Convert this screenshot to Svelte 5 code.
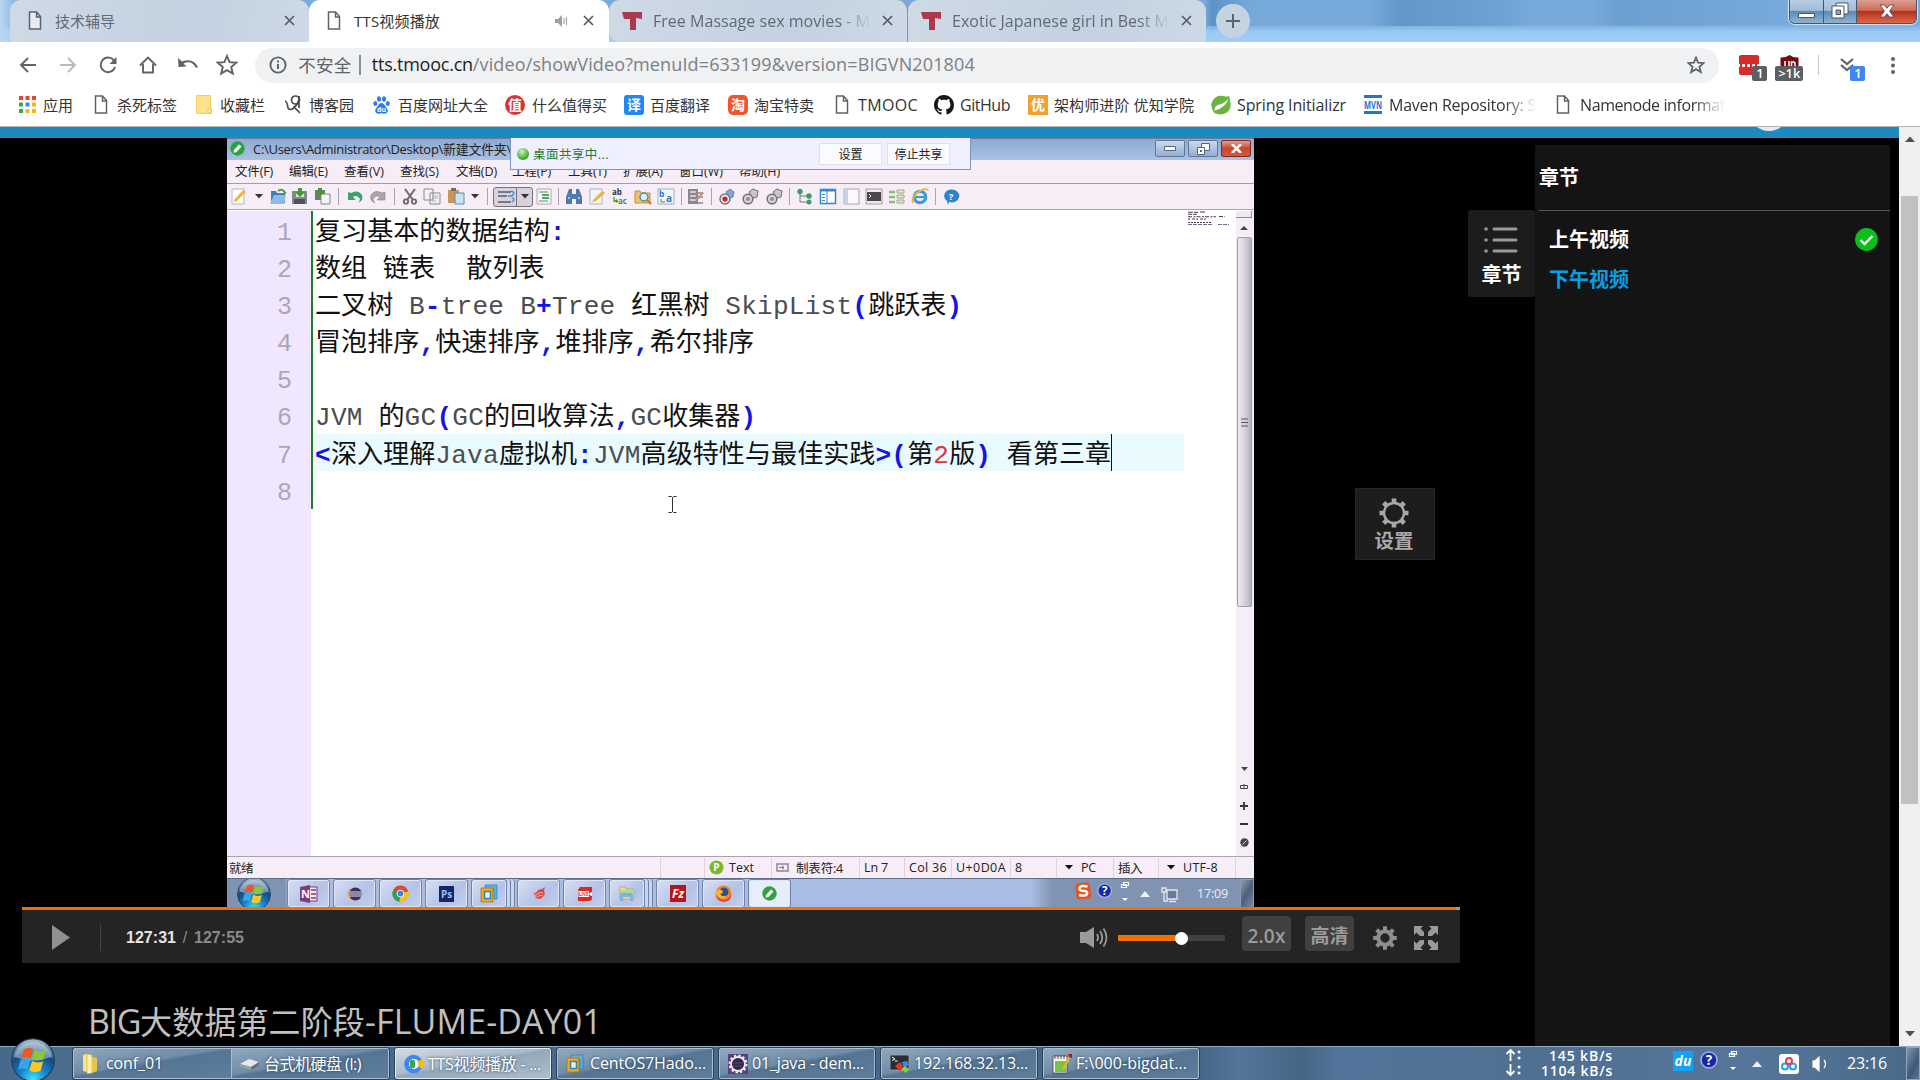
<script>
  // Spreads a label's letters so that it occupies the given width in pixels.
  function fit(node, width) {
    if (!width) return;
    const count = [...node.textContent].length;
    const natural = node.getBoundingClientRect().width;
    node.style.letterSpacing = (width - natural) / count + 'px';
  }

  const tabs = [
    { icon: 'file', label: '技术辅导', w: 60 },
    { icon: 'file', label: 'TTS视频播放', w: 86, active: true, sound: true },
    { icon: 'tee', label: 'Free Massage sex movies - M', w: 217, fade: true },
    { icon: 'tee', label: 'Exotic Japanese girl in Best M', w: 217, fade: true }
  ];

  // slot: full width of the bookmark, gap: icon column width, w: label width
  const bookmarks = [
    { icon: 'apps', label: '应用', slot: 75, gap: 24, w: 30 },
    { icon: 'file', label: '杀死标签', slot: 102, gap: 23, w: 60 },
    { icon: 'folder', label: '收藏栏', slot: 88, gap: 24, w: 45 },
    { icon: 'blog', label: '博客园', slot: 89, gap: 25, w: 45 },
    { icon: 'paw', label: '百度网址大全', slot: 132, gap: 25, w: 90 },
    { icon: 'zhi', label: '什么值得买', slot: 119, gap: 27, w: 75 },
    { icon: 'yi', label: '百度翻译', slot: 104, gap: 26, w: 60 },
    { icon: 'tao', label: '淘宝特卖', slot: 107, gap: 26, w: 60 },
    { icon: 'file', label: 'TMOOC', slot: 99, gap: 23, w: 60, latin: true },
    { icon: 'github', label: 'GitHub', slot: 94, gap: 26, w: 50, latin: true },
    { icon: 'you', label: '架构师进阶 优知学院', slot: 183, gap: 26, w: 140 },
    { icon: 'spring', label: 'Spring Initializr', slot: 153, gap: 26, w: 109, latin: true },
    { icon: 'mvn', label: 'Maven Repository: S', slot: 192, gap: 25, w: 147, latin: true, fade: true },
    { icon: 'file', label: 'Namenode informat', slot: 169, gap: 24, w: 145, latin: true, fade: true }
  ];

  const menus = [
    ['文件(F)', 54, 38], ['编辑(E)', 55, 39], ['查看(V)', 56, 40], ['查找(S)', 56, 39], ['文档(D)', 56, 41],
    ['工程(P)', 56, 39], ['工具(T)', 55, 39], ['扩展(A)', 56, 40], ['窗口(W)', 60, 44], ['帮助(H)', 60, 41]
  ];

  const tools = [
    ['new', 24], ['caret', 16], ['open', 21], ['save', 24], ['saveall', 22], ['sep', 9], ['undo', 23], ['redo', 24], ['sep', 8],
    ['cut', 23], ['copy', 22], ['paste', 25], ['caret', 14], ['sep', 10], ['toggle', 42], ['page', 20], ['sep', 8],
    ['find', 23], ['edit', 23], ['replace', 23], ['findfolder', 23], ['ba', 23], ['sep', 8], ['grid', 22], ['sep', 8],
    ['record', 23], ['cam', 24], ['cam', 23], ['sep', 8], ['tree', 23], ['panel', 23], ['panel2', 23], ['console', 23],
    ['list', 23], ['ie', 23], ['sep', 8], ['help', 23]
  ];

  // Token kinds: t = text, o = operator, n = number, l = latin word
  const code = [
    [['t', '复习基本的数据结构'], ['o', ':']],
    [['t', '数组 链表  散列表']],
    [['t', '二叉树 '], ['l', 'B'], ['o', '-'], ['l', 'tree B'], ['o', '+'], ['l', 'Tree '], ['t', '红黑树 '], ['l', 'SkipList'], ['o', '('], ['t', '跳跃表'], ['o', ')']],
    [['t', '冒泡排序'], ['o', ','], ['t', '快速排序'], ['o', ','], ['t', '堆排序'], ['o', ','], ['t', '希尔排序']],
    [],
    [['l', 'JVM '], ['t', '的'], ['l', 'GC'], ['o', '('], ['l', 'GC'], ['t', '的回收算法'], ['o', ','], ['l', 'GC'], ['t', '收集器'], ['o', ')']],
    [['o', '<'], ['t', '深入理解'], ['l', 'Java'], ['t', '虚拟机'], ['o', ':'], ['l', 'JVM'], ['t', '高级特性与最佳实践'], ['o', '>('], ['t', '第'], ['n', '2'], ['t', '版'], ['o', ')'], ['t', ' 看第三章']],
    []
  ];

  const status = [
    ['', 44, ''], ['p', 67, 'Text', 25], ['tab', 88, '制表符:4', 47], ['', 45, 'Ln 7', 24], ['', 47, 'Col 36', 38],
    ['', 59, 'U+0D0A', 50], ['', 46, '8', 7], ['caret', 57, 'PC', 15], ['', 45, '插入', 24], ['caret', 77, 'UTF-8', 35]
  ];

  const innerTasks = [
    ['onenote', 43, 3], ['eclipse', 43, 3], ['chrome', 43, 3], ['ps', 43, 3], ['vm', 36, 10, true], ['bird', 43, 3], ['live', 43, 3],
    ['explorer', 36, 11, true], ['fz', 43, 3], ['firefox', 43, 3], ['green', 43, 0]
  ];

  const tasks = [
    { icon: 'folders', label: 'conf_01', w: 57, kind: 'first' },
    { icon: 'disk', label: '台式机硬盘 (I:)', w: 97, kind: 'joined' },
    { icon: 'tschrome', label: 'TTS视频播放 - ...', w: 113, kind: 'lit' },
    { icon: 'vm', label: 'CentOS7Hado...', w: 116 },
    { icon: 'gearbox', label: '01_java - dem...', w: 112 },
    { icon: 'term', label: '192.168.32.13...', w: 114 },
    { icon: 'note', label: 'F:\\000-bigdat...', w: 111 }
  ];
</script>

{#snippet winlogo()}
  <svg viewBox="0 0 42 42" class="orb" aria-hidden="true">
    <defs>
      <radialGradient id="orbfill" cx="50%" cy="95%" r="90%">
        <stop offset="0" stop-color="#3be4ff" />
        <stop offset=".35" stop-color="#1687cc" />
        <stop offset=".7" stop-color="#17497e" />
        <stop offset="1" stop-color="#9ab4cc" />
      </radialGradient>
    </defs>
    <circle cx="21" cy="21" r="20.3" fill="url(#orbfill)" stroke="#173a5c" stroke-width="1" />
    <path d="M3 18a18.500 18.500 0 0 1 36 0q-18 7-36 0z" fill="#fff" opacity=".38" />
    <path d="M12 11q5-3 9-.5l-2.300 9q-4-2.500-9-.3z" fill="#ec5a24" />
    <path d="M22.500 11.300q5 2.700 11-.3l-2.500 9.200q-5.500 2.300-10.800-.4z" fill="#8cc63a" />
    <path d="M9.200 21q5-2.500 9.200.3l-2.400 9q-4.500-2.300-9.200 0z" fill="#37a6ea" />
    <path d="M20 22q5.300 2.600 10.700.2l-2.400 9q-5.400 2.600-10.700-.2z" fill="#fdc528" />
  </svg>
{/snippet}

{#snippet icon(name)}
  {#if name === 'file'}
    <svg width="14" height="19" viewBox="0 0 14 19"><path d="M1.500 1h7l4 4.500V18h-11zM8.500 1v5h4" fill="#fff" fill-opacity=".5" stroke="#5f6368" stroke-width="1.500" /></svg>
  {:else if name === 'tee'}
    <svg width="21" height="20" viewBox="0 0 21 20"><path d="M0 1h20v7l-6-1v12H8V8H2z" fill="#ad3a4c" /></svg>
  {:else if name === 'apps'}
    <svg width="17" height="17" viewBox="0 0 17 17">
      <path d="M0 0h4v4H0zM6.500 0h4v4h-4zM13 0h4v4h-4z" fill="#ea4335" /><path d="M0 6.500h4v4H0z" fill="#34a853" /><path d="M6.500 6.500h4v4h-4z" fill="#4285f4" />
      <path d="M13 6.500h4v4h-4zM6.500 13h4v4h-4zM13 13h4v4h-4z" fill="#fbb30a" /><path d="M0 13h4v4H0z" fill="#34a853" />
    </svg>
  {:else if name === 'folder'}
    <svg width="16" height="19" viewBox="0 0 16 19"><path d="M.5.500h14v12l1 2v4H.5z" fill="#fee18a" stroke="#f2cf60" /><path d="M12 14l3-1v5h-3z" fill="#fff0b8" stroke="#e3bb47" stroke-width=".7" /></svg>
  {:else if name === 'blog'}
    <svg width="18" height="19" viewBox="0 0 18 19" fill="none" stroke="#4a4a4a" stroke-width="1.700"><path d="M1 6q2 0 3 7 2 3 6 0" /><circle cx="11.500" cy="5" r="4" /><path d="M15 4q-1 6-5 8l6 6M15 1v12" /></svg>
  {:else if name === 'paw'}
    <svg width="17" height="18" viewBox="0 0 17 18" fill="#2b7cee"><ellipse cx="2.300" cy="7.500" rx="2" ry="2.600" /><ellipse cx="6" cy="3" rx="2" ry="2.800" /><ellipse cx="11" cy="3" rx="2" ry="2.800" /><ellipse cx="14.800" cy="7.500" rx="2" ry="2.600" /><path d="M8.500 7q2.500 0 4 3.500 3.500 3 1.700 6-1.700 2-5.700.8-4 1.200-5.700-.8-1.800-3 1.700-6Q6 7 8.500 7z" /><text x="8.500" y="16" font-size="7" font-weight="bold" fill="#fff" text-anchor="middle">du</text></svg>
  {:else if name === 'zhi' || name === 'yi' || name === 'tao' || name === 'you'}
    <span class="glyph {name}">{{ zhi: '值', yi: '译', tao: '淘', you: '优' }[name]}</span>
  {:else if name === 'github'}
    <svg width="20" height="20" viewBox="0 0 16 16"><path fill="#15171a" d="M8 0C3.580 0 0 3.580 0 8c0 3.540 2.290 6.530 5.470 7.590.4.070.55-.17.55-.38 0-.19-.01-.82-.01-1.490-2.010.37-2.530-.49-2.690-.94-.09-.23-.48-.94-.82-1.130-.28-.15-.68-.52-.01-.53.63-.01 1.080.58 1.230.82.72 1.210 1.870.87 2.330.66.070-.52.280-.87.510-1.070-1.780-.2-3.640-.89-3.640-3.950 0-.87.310-1.590.82-2.150-.08-.2-.36-1.020.080-2.120 0 0 .67-.21 2.200.82.640-.18 1.320-.27 2-.27s1.360.090 2 .27c1.530-1.040 2.200-.82 2.200-.82.440 1.100.160 1.920.080 2.120.51.560.82 1.270.82 2.150 0 3.070-1.870 3.750-3.650 3.950.290.25.540.73.540 1.480 0 1.070-.01 1.930-.01 2.200 0 .21.150.46.550.38A8.010 8.010 0 0 0 16 8c0-4.420-3.580-8-8-8z" /></svg>
  {:else if name === 'spring'}
    <svg width="20" height="20" viewBox="0 0 20 20"><path d="M18 1q4 12-2 16.500-7 4-13 0Q-1.500 11 1.500 6 5 0 11 .8q4 1.500 7 .2z" fill="#6db33f" /><path d="M17.500 3.500Q13 9 8 9.500q-5 1.500-4.500 6 4-.3 8-3.500 4.500-3.500 6-8.500z" fill="#fff" /><path d="M3 17.500q8 1 14-8" fill="none" stroke="#6db33f" stroke-width="1.500" /></svg>
  {:else if name === 'mvn'}
    <svg width="18" height="19" viewBox="0 0 18 19"><path d="M0 0h18v3H0zM0 16h18v3H0z" fill="#2574c9" /><text x="9" y="13.700" text-anchor="middle" font-size="10.500" font-weight="bold" fill="#2574c9" textLength="18" lengthAdjust="spacingAndGlyphs">MVN</text></svg>
  {:else if name === 'onenote'}
    <svg width="18" height="18" viewBox="0 0 18 18"><path d="M9 2h8v14H9z" fill="#f3e8f5" stroke="#80397b" /><path d="M11 5h3M11 9h3M11 13h3" stroke="#80397b" stroke-width="1.300" /><path d="M15 4v2M15 8v2M15 12v2" stroke="#80397b" stroke-width="1.500" /><path d="M0 2l10-2v18L0 16z" fill="#80397b" /><text x="1" y="13" font-size="11" font-weight="bold" fill="#fff">N</text></svg>
  {:else if name === 'eclipse'}
    <svg width="16" height="16" viewBox="0 0 16 16"><circle cx="7" cy="8" r="6.500" fill="#e8a45a" /><circle cx="8.500" cy="8" r="6.500" fill="#3b3158" /><path d="M2 6h13M2 8h13M2 10h13" stroke="#e4e0f0" stroke-width="1.100" /></svg>
  {:else if name === 'chrome'}
    <svg width="17" height="17" viewBox="0 0 18 18"><circle cx="9" cy="9" r="8.500" fill="#e24436" /><path d="M9 9L1.600 4.700A8.500 8.500 0 0 0 8 17.500z" fill="#2fa24d" /><path d="M9 9l8.400-2.500A8.500 8.500 0 0 1 8 17.500z" fill="#fbc116" /><circle cx="9" cy="9" r="4" fill="#fff" /><circle cx="9" cy="9" r="3.100" fill="#3f83ea" /></svg>
  {:else if name === 'tschrome'}
    <svg width="19" height="20" viewBox="0 0 19 20"><circle cx="9.500" cy="10" r="9.300" fill="#4285f4" /><circle cx="10" cy="10" r="5" fill="#fff" /><path d="M14 8l2-2h3v8h-3l-2-2z" fill="#fbbc05" /><path d="M6 7l1-1h3l1 1v6l-1 1H7l-1-1z" fill="#34a853" /></svg>
  {:else if name === 'ps'}
    <svg width="15" height="16" viewBox="0 0 15 16"><path d="M0 0h15v16H0z" fill="#1b2367" /><text x="2" y="11.500" font-size="10" font-weight="bold" fill="#8fc3f5">Ps</text></svg>
  {:else if name === 'vm'}
    <svg width="18" height="20" viewBox="0 0 18 20"><path d="M5 1h12v14h-3V5H5z" fill="#5ab6dd" stroke="#2c7ba3" stroke-width=".7" /><path d="M1 4h12v14H1z" fill="#f5a623" stroke="#a8690f" stroke-width=".7" /><path d="M4.500 7.500h6v7h-6z" fill="#dff0fa" stroke="#3086b0" stroke-width="1.500" /></svg>
  {:else if name === 'bird'}
    <svg width="16" height="15" viewBox="0 0 16 15"><path d="M1 6l4 1q2-4 6-4l3-2-1 4q2 3-1 6-4 4-8 0l2-1-4-2h3z" fill="#dc4a45" /><path d="M5 9q4-4 7-2M6 11q3-3 6-1" stroke="#f7b5ae" fill="none" /></svg>
  {:else if name === 'live'}
    <svg width="16" height="16" viewBox="0 0 16 16"><path d="M3 1h12v11q0 3-3 3H1V4z" fill="#d92a24" /><path d="M1.500 5h10.500v6H1.500zM12.500 7l2.500-1v4l-2.500-1z" fill="#fff" /><text x="6.800" y="9.800" text-anchor="middle" font-size="4.500" font-weight="bold" fill="#d92a24">LIVE</text></svg>
  {:else if name === 'explorer'}
    <svg width="18" height="17" viewBox="0 0 18 17"><path d="M2 2h5l1 2h8v10H2z" fill="#f2da86" stroke="#c5a548" stroke-width=".8" /><path d="M3 5h12v3H3z" fill="#a7d8a0" /><path d="M2 16v-6q0-2 2-2h9q2 0 2 2v6h-3v-4H5v4z" fill="#7bb3dd" /></svg>
  {:else if name === 'fz'}
    <svg width="16" height="17" viewBox="0 0 16 17"><path d="M0 0h16v17H0z" fill="#b3161b" /><text x="8" y="13" text-anchor="middle" font-size="12" font-weight="bold" font-style="italic" fill="#fff">Fz</text></svg>
  {:else if name === 'firefox'}
    <svg width="17" height="17" viewBox="0 0 17 17"><circle cx="8.500" cy="8.500" r="8" fill="#f08a1e" /><path d="M1 5q0 9 8 10 6-1 7-7 1 7-5 8.500-8 1-10-5.500z" fill="#e2402c" /><circle cx="9" cy="7" r="4.500" fill="#264f9c" /><path d="M1 6q4-3 7 0 0 3-3 3 3 4 7 1-2 5-7 3-5-2-4-7z" fill="#fbb42c" /></svg>
  {:else if name === 'green'}
    <svg width="15" height="15" viewBox="0 0 15 15"><circle cx="7.500" cy="7.500" r="7.200" fill="#2ca33e" /><path d="M4 9l5-5.500 2.500 2L6.500 11l-3 .8z" fill="#fff" /></svg>
  {:else if name === 'folders'}
    <svg width="17" height="20" viewBox="0 0 17 20"><path d="M1 1l4-1v18l-4-1z" fill="#f8e28a" /><path d="M5 0l5 1v18l-5 1z" fill="#fff0a8" stroke="#c9a83c" stroke-width=".6" /><path d="M10 3l5 1v13l-5 2z" fill="#e8c552" /></svg>
  {:else if name === 'disk'}
    <svg width="20" height="12" viewBox="0 0 20 12"><path d="M0 6l9-5 10 3-8 5z" fill="#e5e7ea" /><path d="M0 6l11 3v3L0 8.500z" fill="#9b9fa3" /><path d="M11 9l8-5v3l-8 5z" fill="#696e72" /><path d="M7 9l3 .8V11l-3-.8z" fill="#50d94c" /></svg>
  {:else if name === 'gearbox'}
    <svg width="20" height="20" viewBox="0 0 20 20"><path d="M0 0h20v20H0z" fill="#5b4080" /><circle cx="10" cy="10" r="7" fill="#35264d" stroke="#efeaf5" stroke-width="1.800" /><circle cx="10" cy="10" r="8.500" fill="none" stroke="#efeaf5" stroke-width="2" stroke-dasharray="2.400 2.050" /><path d="M5 9h10M5 12h9" stroke="#5b4a78" /></svg>
  {:else if name === 'term'}
    <svg width="20" height="20" viewBox="0 0 20 20"><path d="M0 1h19v15H0z" fill="#2c2d30" stroke="#a5abb1" stroke-width=".8" /><path d="M2 3l3 2-3 1.500M5 7h2.500" stroke="#fff" fill="none" /><path d="M5 12l5-4 3 4-3 5z" fill="#e5322d" /><path d="M12 8l5-1 2 4-5 3z" fill="#368bf0" /><path d="M11 15l4-3 4 3-3 4z" fill="#7fdb27" /></svg>
  {:else if name === 'note'}
    <svg width="20" height="20" viewBox="0 0 20 20"><path d="M1 2h14v17H1z" fill="#f5f7f2" stroke="#444" stroke-width=".8" /><path d="M3 7h11v11H3z" fill="#7cc142" /><path d="M3 1v4M6 1v4M9 1v4M12 1v4" stroke="#555" /><path d="M11 14l5-11 2 1-5 11-2 1z" fill="#f2b31b" /><path d="M16 0h4v4l-3-1z" fill="#b3141d" /></svg>
  {:else if name === 'qmark'}
    <svg width="18" height="18" viewBox="0 0 18 18"><circle cx="9" cy="9" r="8" fill="#1526b0" stroke="#a8b2d8" stroke-width="1.500" /><text x="9" y="13.800" text-anchor="middle" font-size="13.500" font-weight="bold" fill="#fff">?</text></svg>
  {:else if name === 'imebar'}
    <svg width="10" height="24" viewBox="0 0 10 24"><path d="M3.500 1.500h5v3h-5zM1.500 3.500h5v3h-5z" fill="#6c87a5" stroke="#fff" stroke-width="1.200" /><path d="M2 17h6l-3 3z" fill="#fff" /></svg>
  {:else if name === 'uptri'}
    <svg width="10" height="6" viewBox="0 0 10 6"><path d="M0 6l5-6 5 6z" fill="#eef2f7" /></svg>
  {/if}
{/snippet}

{#snippet tool(name)}
  {#if name === 'sep'}
    <span class="tsep"></span>
  {:else if name === 'caret'}
    <svg width="8" height="5" viewBox="0 0 8 5"><path d="M0 0h8L4 4.500z" fill="#333" /></svg>
  {:else if name === 'toggle'}
    <span class="toggle">
      <svg width="22" height="16" viewBox="0 0 22 16"><path d="M4 3h13M4 7h9M4 13h13" stroke="#555b70" stroke-width="1.500" /><path d="M17 2q5 1 1 5h-4M18 9q4 1 0 4" stroke="#4b8fd8" stroke-width="1.500" fill="none" /></svg>
      <svg width="17" height="5" viewBox="0 0 17 5"><path d="M5 0h8L9 4.500z" fill="#333" /></svg>
    </span>
  {:else}
    <svg width="18" height="17" viewBox="0 0 18 17">
      {#if name === 'new'}<path d="M2 1h12v15H2z" fill="#fdfdfd" stroke="#b9b4b9" /><path d="M4 12l9-10 3 2-9 9-3 1z" fill="#f3b532" />
      {:else if name === 'open'}<path d="M2 3h5l1 2h8v10H2z" fill="#3f7fc0" /><path d="M5 7h12l-2 9H1z" fill="#8dbbe6" /><path d="M9 3q5-3 7 2l1-1" stroke="#49a542" stroke-width="2" fill="none" />
      {:else if name === 'save'}<path d="M1 3h15v13H1z" fill="#85888e" /><path d="M3 11h11v5H3z" fill="#4f5258" /><path d="M5 4h8v5H5z" fill="#dcdde0" /><path d="M7 0h4v4h3L9 9 4 4h3z" fill="#3f9d2c" />
      {:else if name === 'saveall'}<path d="M1 2h10v10H1z" fill="#74777d" /><path d="M7 6h9v10H7z" fill="#f5f5f5" stroke="#85878c" /><path d="M4 0h4v4h3L6 8 2 4h2z" fill="#3f9d2c" />
      {:else if name === 'undo'}<path d="M2 4v8h8L7 9q4-3 7 2 0 2-2 4 6-3 4-8-4-6-11-2z" fill="#39a36e" />
      {:else if name === 'redo'}<path d="M16 4v8H8l3-3Q7 6 4 11q0 2 2 4-6-3-4-8 4-6 11-2z" fill="#aaa5ab" stroke="#8b868d" stroke-width=".6" />
      {:else if name === 'cut'}<path d="M4 1l8 11M14 1L6 12" stroke="#6b676d" stroke-width="2" /><circle cx="5" cy="13.500" r="2.200" fill="none" stroke="#6b676d" stroke-width="1.800" /><circle cx="13" cy="13.500" r="2.200" fill="none" stroke="#6b676d" stroke-width="1.800" />
      {:else if name === 'copy'}<path d="M1 1h9v11H1zM7 5h10v11H7z" fill="#f3f1f4" stroke="#8c898e" /><path d="M9 8h6M9 10h6M9 13h4" stroke="#aaa" />
      {:else if name === 'paste'}<path d="M1 2h11v13H1z" fill="#c99655" /><path d="M4 0h5v3H4z" fill="#707070" /><path d="M8 5h9v11H8z" fill="#cde1f5" stroke="#5b8bb8" />
      {:else if name === 'page'}<path d="M2 1h14v15H2z" fill="#f8f6f9" stroke="#aaa" /><path d="M4 4h9M4 13h9" stroke="#777" /><path d="M7 7h7M7 10h7" stroke="#46b14c" stroke-width="2" />
      {:else if name === 'find'}<path d="M4 1h3v5h4V1h3l3 8v7h-6v-5H7v5H1V9z" fill="#4f7aad" /><path d="M3 10h2M13 10h2" stroke="#c7d9ec" stroke-width="1.500" />
      {:else if name === 'edit'}<path d="M2 1h12v15H2z" fill="#f1f4fa" stroke="#aab3c0" /><path d="M5 12l9-9 3 2-9 8-4 1z" fill="#eeb33f" />
      {:else if name === 'replace'}<text x="1" y="6.500" font-size="8" font-weight="bold" fill="#333">ab</text><text x="7" y="15.500" font-size="8" font-weight="bold" fill="#3f9b35">ac</text><path d="M3 9v4h3M5 11.500l1.500 1.500L5 14.500" stroke="#3f9b35" stroke-width="1.300" fill="none" />
      {:else if name === 'findfolder'}<path d="M1 3h5l1 2h9v10H1z" fill="#edc46d" stroke="#c3923a" /><circle cx="10" cy="9" r="4" fill="#dbeefa" stroke="#5488b5" stroke-width="1.500" /><path d="M13 12l4 4" stroke="#c27a2c" stroke-width="2" />
      {:else if name === 'ba'}<path d="M1 1h16v15H1z" fill="#f2f6fa" stroke="#9ab0c5" /><text x="2" y="9" font-size="8.500" font-weight="bold" fill="#3278b6">b</text><text x="9" y="14" font-size="10" font-weight="bold" fill="#3278b6">a</text><path d="M4 11v3h4" stroke="#3f9b35" fill="none" />
      {:else if name === 'grid'}<path d="M1 1h10v15H1z" fill="#8b878d" /><path d="M3 4h6M3 8h6M3 12h6" stroke="#e6e2e8" stroke-width="1.500" /><path d="M10 5h6M10 9h6M9 15h7" stroke="#8b878d" stroke-width="1.300" /><path d="M8 12l7-8 2 1-7 8z" fill="#c08f78" />
      {:else if name === 'record'}<circle cx="7" cy="11" r="5" fill="#f2eaf0" stroke="#77727a" stroke-width="1.500" /><circle cx="7" cy="11" r="2.600" fill="#c8252b" /><path d="M8 4l4-3 4 3-1 5-3 1z" fill="#7da5d3" stroke="#4f79a8" stroke-width=".8" />
      {:else if name === 'cam'}<circle cx="7" cy="11" r="4.800" fill="#d8d4d9" stroke="#716d73" stroke-width="1.500" /><circle cx="7" cy="11" r="2" fill="#918d93" /><path d="M8 4l4-3 5 2-1 6-4 1z" fill="#c9c5ca" stroke="#716d73" />
      {:else if name === 'tree'}<path d="M4 4v10h8M4 8h8" stroke="#777" fill="none" /><circle cx="4" cy="3.500" r="2.700" fill="#35a060" /><circle cx="13" cy="8" r="2.700" fill="#35a060" /><circle cx="13" cy="14" r="2.500" fill="#35a060" />
      {:else if name === 'panel'}<path d="M1.500 1.500h15v14h-15z" fill="#fff" stroke="#3588c5" stroke-width="1.500" /><path d="M8 2v13" stroke="#3588c5" /><path d="M1 1h16v2.500H1z" fill="#3588c5" /><path d="M3 6.500h3M3 9.500h3M3 12.500h3" stroke="#3588c5" />
      {:else if name === 'panel2'}<path d="M2 1h15v15H2z" fill="#fbf7fc" stroke="#a7a2ac" /><path d="M2 1h4v15H2z" fill="#c5d3ea" />
      {:else if name === 'console'}<path d="M1 1h16v15H1z" fill="#ece8ed" stroke="#a5a1a7" /><path d="M2 4h14v9H2z" fill="#4b484d" /><path d="M4 6l2 2-2 2" stroke="#eee" fill="none" />
      {:else if name === 'list'}<path d="M1 4h6M1 9h6M1 14h6" stroke="#8bbb79" stroke-width="2.500" /><path d="M9 2h7v3H9zM9 7h7v3H9zM9 12h7v3H9z" fill="#d9efbf" stroke="#9ca791" />
      {:else if name === 'ie'}<circle cx="9" cy="9" r="5.700" fill="none" stroke="#3c9bd9" stroke-width="3.200" /><path d="M5 9h10" stroke="#3c9bd9" stroke-width="2.200" /><path d="M2 15Q0 8 9 3q7-4 8 0" stroke="#e8ba36" stroke-width="1.800" fill="none" />
      {:else if name === 'help'}<path d="M9 1.500a7.500 6.500 0 1 1-2 12.500l-1 3-1-4A7.500 6.500 0 0 1 9 1.500z" fill="#2d83cc" /><text x="9" y="11.500" text-anchor="middle" font-size="9.500" font-weight="bold" fill="#fff">?</text>
      {/if}
    </svg>
  {/if}
{/snippet}

<div class="screen">
  <header class="strip">
    {#each tabs as tab}
      <div class="tab" class:active={tab.active}>
        <span class="tabicon">{@render icon(tab.icon)}</span>
        <span class="tablabel" class:fade={tab.fade}><span class="t" class:latin={tab.fade} use:fit={tab.w}>{tab.label}</span></span>
        {#if tab.sound}
          <svg class="sound" width="13" height="12" viewBox="0 0 13 12"><path d="M0 4h3l4-4v12L3 8H0z" fill="#9a9da1" /><path d="M9 3v6M11.500 2v8" stroke="#a5a8ac" stroke-width="1.200" /></svg>
        {/if}
        <svg class="close" width="11" height="11" viewBox="0 0 11 11"><path d="M1 1l9 9M10 1l-9 9" stroke="#565c63" stroke-width="1.700" /></svg>
      </div>
    {/each}
    <span class="newtab"><svg width="14" height="14" viewBox="0 0 14 14"><path d="M7 0v14M0 7h14" stroke="#58646f" stroke-width="2" /></svg></span>
    <div class="winctl">
      <span class="wmin"><svg width="17" height="5" viewBox="0 0 17 5"><path d="M.5.500h16v4H.5z" fill="#fff" stroke="#4b5668" /></svg></span>
      <span class="wmax"><svg width="18" height="17" viewBox="0 0 18 17"><path d="M5 1h12v11H5z" fill="#fff" stroke="#4b5668" /><path d="M1 4h12v12H1z" fill="#fff" stroke="#4b5668" /><path d="M5 8h4.500v4.500H5z" fill="#8fa9c5" stroke="#4b5668" /></svg></span>
      <span class="wx"><svg width="16" height="14" viewBox="0 0 16 14"><path d="M1 1h4.500L8 4.200 10.500 1H15l-4.500 6 4.500 6h-4.500L8 9.800 5.500 13H1l4.500-6z" fill="#fff" stroke="#5b4a55" stroke-width=".9" /></svg></span>
    </div>
  </header>

  <nav class="toolbar">
    <span class="nb"><svg width="18" height="18" viewBox="0 0 18 18" class="ln"><path d="M17 9H2M9 2L2 9l7 7" /></svg></span>
    <span class="nb"><svg width="18" height="18" viewBox="0 0 18 18" class="ln dim"><path d="M1 9h15M9 2l7 7-7 7" /></svg></span>
    <span class="nb"><svg width="18" height="18" viewBox="0 0 18 18" class="ln"><path d="M15.500 5.500A7.300 7.300 0 1 0 16 11" /><path d="M17.500 1v7h-7z" fill="#5f6368" stroke="none" /></svg></span>
    <span class="nb"><svg width="18" height="18" viewBox="0 0 18 18" class="ln"><path d="M1 9.500L9 1.500l8 8M4 8v8.500h10V8" /></svg></span>
    <span class="nb"><svg width="22" height="16" viewBox="0 0 22 16"><path d="M1 1l.5 9 8-.5-3-3q8-4 12.500 4.500l2-1Q16 .5 5 4.500z" fill="#5f6368" /></svg></span>
    <span class="nb"><svg width="22" height="22" viewBox="0 0 22 22" class="ln"><path d="M11 2l2.600 6.200 6.700.5-5.100 4.400 1.600 6.500-5.800-3.500-5.800 3.500 1.600-6.500-5.100-4.400 6.700-.5z" /></svg></span>
    <div class="omni">
      <svg width="18" height="18" viewBox="0 0 18 18" class="ln"><circle cx="9" cy="9" r="7.600" /><path d="M9 8v5M9 4.500v2" stroke-width="2" /></svg>
      <span class="unsafe"><span class="t" use:fit={53}>不安全</span></span>
      <span class="bar"></span>
      <span class="host t" use:fit={101}>tts.tmooc.cn</span><span class="path t" use:fit={502}>/video/showVideo?menuId=633199&amp;version=BIGVN201804</span>
      <svg class="fav ln" width="18" height="18" viewBox="0 0 22 22"><path d="M11 2l2.600 6.200 6.700.5-5.100 4.400 1.600 6.500-5.800-3.500-5.800 3.500 1.600-6.500-5.100-4.400 6.700-.5z" stroke-width="2.200" /></svg>
    </div>
    <div class="ext red"><i></i><b>1</b></div>
    <div class="ext ub">
      <svg width="19" height="20" viewBox="0 0 19 20"><path d="M9.500 0q4 3 9 2.500V10q-1 6-9 10Q1 16 .5 10V2.500Q5 3 9.500 0z" fill="#7a0710" /><path d="M5 6v5q0 2 2 2t2-2V6M11.500 13V7h2q1.500 0 1.500 2v4" fill="none" stroke="#fff" stroke-width="1.500" /></svg>
      <b>&gt;1k</b>
    </div>
    <span class="vbar"></span>
    <div class="ext chev"><svg width="14" height="14" viewBox="0 0 14 14" class="ln"><path d="M1 1l6 5 6-5M1 7l6 5 6-5" stroke-width="2.200" /></svg><b>1</b></div>
    <svg class="kebab" width="4" height="17" viewBox="0 0 4 17" fill="#5f6368"><circle cx="2" cy="2" r="2" /><circle cx="2" cy="8.500" r="2" /><circle cx="2" cy="15" r="2" /></svg>
  </nav>

  <nav class="marks">
    {#each bookmarks as b}
      <div class="mark" style:width="{b.slot}px">
        <span class="mi" style:width="{b.gap}px">{@render icon(b.icon)}</span>
        <span class:fade={b.fade}><span class="t" class:latin={b.latin} use:fit={b.w}>{b.label}</span></span>
      </div>
    {/each}
  </nav>

  <main class="page">
    <div class="content">
      <div class="bluebar"><span class="avatar"></span></div>
      <div class="columns">
        <section class="left">
          <div class="video">
            <div class="etitle">
              <span class="eicon">{@render icon('green')}</span>
              <span class="t epath" use:fit={258}>C:\Users\Administrator\Desktop\新建文件夹\</span>
              <div class="ectl">
                <span><svg width="12" height="5" viewBox="0 0 12 5"><path d="M.5.500h11v4H.5z" fill="#fff" stroke="#59657c" /></svg></span>
                <span><svg width="13" height="12" viewBox="0 0 13 12"><path d="M4.500.500h8v7h-8z" fill="#fff" stroke="#59657c" /><path d="M.5 4.500h7v7h-7z" fill="#fff" stroke="#59657c" /><path d="M3 7h2v2H3z" fill="#59657c" /></svg></span>
                <span class="ex"><svg width="11" height="9" viewBox="0 0 11 9"><path d="M1 0l9 9M10 0L1 9" stroke="#fff" stroke-width="2.600" /></svg></span>
              </div>
            </div>
            <div class="emenu">
              {#each menus as [label, slot, w]}
                <span style:width="{slot}px"><span class="t" use:fit={w}>{label}</span></span>
              {/each}
            </div>
            <div class="share">
              <i class="ball"></i><span class="t sl" use:fit={76}>桌面共享中...</span>
              <span class="sbtn">设置</span><span class="sbtn">停止共享</span>
            </div>
            <div class="etools">
              {#each tools as [name, w]}<span class="tool" style:width="{w}px">{@render tool(name)}</span>{/each}
            </div>
            <div class="edit">
              <div class="gutter">
                {#each code as _, i}<span>{i + 1}</span>{/each}
              </div>
              <div class="lines">
                {#each code as line, i}
                  <div class="line" class:current={i === 6}>{#each line as [kind, text]}<span class={kind}>{text}</span>{/each}{#if i === 6}<i class="caret"></i>{/if}</div>
                {/each}
              </div>
              <svg class="mini" width="42" height="15" viewBox="0 0 42 15" stroke="#4a3a48" stroke-width="1.100"><path d="M0 1.200h10M12 1h6" stroke-dasharray="5 1" /><path d="M0 3.200h9" stroke-dasharray="4 1" /><path d="M0 5.800h28M31 5.500h6" stroke-dasharray="4 1.500 2 1" /><path d="M0 8h20" stroke-dasharray="2 2 3 1" /><path d="M0 11.500h24" stroke-dasharray="2 1" /><path d="M0 13.500h25M30 13.500h11" stroke="#77649c" stroke-dasharray="4 1" /></svg>
              <div class="escroll">
                <i class="split"></i>
                <svg class="up" width="8" height="4" viewBox="0 0 8 4"><path d="M0 4l4-4 4 4z" fill="#444" /></svg>
                <div class="ethumb"><svg width="7" height="9" viewBox="0 0 7 9"><path d="M0 1h7M0 4.500h7M0 8h7" stroke="#5d5863" /></svg></div>
                <div class="enav">
                  <svg width="7" height="4" viewBox="0 0 7 4"><path d="M0 0h7L3.500 4z" fill="#444" /></svg>
                  <svg width="8" height="5" viewBox="0 0 8 5"><path d="M.5 1.500h7v3h-7zM4 0v5" fill="none" stroke="#444" /></svg>
                  <svg width="8" height="8" viewBox="0 0 8 8"><path d="M4 0v8M0 4h8" stroke="#333" stroke-width="1.800" /></svg>
                  <svg width="8" height="2" viewBox="0 0 8 2"><path d="M0 1h8" stroke="#333" stroke-width="2" /></svg>
                  <svg width="9" height="9" viewBox="0 0 9 9"><circle cx="4.500" cy="4.500" r="4.200" fill="#444" /><path d="M2.500 6.500l4-4" stroke="#ddd" /></svg>
                </div>
              </div>
              <svg class="ibeam" width="9" height="17" viewBox="0 0 9 17"><path d="M.5.500h3l1 1 1-1h3M.5 16.500h3l1-1 1 1h3M4.500 1v15" fill="none" stroke="#333" /></svg>
            </div>
            <div class="status">
              <span class="ready"><span class="t" use:fit={24}>就绪</span></span>
              {#each status as [ic, slot, label, w]}
                <span class="cell" style:width="{slot}px">
                  {#if ic === 'p'}<span class="si"><svg width="15" height="15" viewBox="0 0 15 15"><circle cx="7.500" cy="7.500" r="7" fill="#7cb82b" /><text x="7.500" y="11.200" font-size="10" font-weight="bold" fill="#fff" text-anchor="middle">P</text></svg></span>
                  {:else if ic === 'tab'}<span class="si"><svg width="13" height="9" viewBox="0 0 13 9"><path d="M1 1h11v7H1z" fill="none" stroke="#8d888f" stroke-width="1.500" /><path d="M3 4.500h5M7 2.500v4" stroke="#777" /></svg></span>
                  {:else if ic === 'caret'}<span class="si c"><svg width="8" height="5" viewBox="0 0 8 5"><path d="M0 0h8L4 4.500z" fill="#111" /></svg></span>{/if}
                  <span class="t" use:fit={w}>{label}</span>
                </span>
              {/each}
              <span class="cell"></span>
            </div>
            <div class="itask">
              <span class="iorb">{@render winlogo()}</span>
              {#each innerTasks as [name, w, gap, stack], i}
                <span class="ib" class:stack class:on={i === 10} style:width="{w}px" style:margin-right="{gap}px">{@render icon(name)}</span>
              {/each}
              <div class="itray">
                <svg width="17" height="18" viewBox="0 0 17 18"><rect x="1" y="1" width="14.500" height="16" rx="3" fill="#e8551c" transform="rotate(-6 8 9)" /><path d="M12.500 4.500Q5 3 4.500 6t5 3q3.500.5 2.500 3t-8 1" fill="none" stroke="#fff" stroke-width="2.400" /></svg>
                <span class="q">{@render icon('qmark')}</span>
                <span class="ime">{@render icon('imebar')}</span>
                <span class="tri">{@render icon('uptri')}</span>
                <svg class="net" width="17" height="17" viewBox="0 0 17 17" fill="none" stroke="#e3e9f3" stroke-width="1.300"><path d="M6 4h10v9H6zM8 15.500h7" fill="#6a7a98" /><path d="M1 2h4v4H1zM3 6v9h4" /></svg>
                <span class="iclock"><span class="t" use:fit={31}>17:09</span></span>
                <span class="idesk"></span>
              </div>
            </div>
          </div>
          <div class="progress"><i></i></div>
          <div class="controls">
            <svg class="play" width="18" height="25" viewBox="0 0 18 25"><path d="M0 0l18 12.500L0 25z" fill="#909090" /></svg>
            <span class="cdiv"></span>
            <span class="now t" use:fit={50}>127:31</span><span class="slash">/</span><span class="total t" use:fit={50}>127:55</span>
            <svg class="vol" width="29" height="21" viewBox="0 0 29 21"><path d="M0 5h6l8-5v21l-8-5H0z" fill="#9a9a9a" /><path d="M17 7q2 3.500 0 7M20 4q4.500 6.500 0 13M23.500 1.500q6 9 0 18" fill="none" stroke="#9a9a9a" stroke-width="1.800" /></svg>
            <div class="slider"><i></i><b></b></div>
            <span class="pill first"><span class="t" use:fit={38}>2.0x</span></span>
            <span class="pill"><span class="t" use:fit={38}>高清</span></span>
            <svg class="gear" width="24" height="24" viewBox="-12 -12 24 24" fill="none" stroke="#8e8e8e"><circle r="6.700" stroke-width="4" />{#each [0, 45, 90, 135] as a}<path d="M0-11.800v4M0 11.800v-4" stroke-width="4" transform="rotate({a})" />{/each}</svg>
            <svg class="full" width="24" height="24" viewBox="0 0 24 24" fill="#9a9a9a"><path d="M0 0h9L6.500 2.500 10 6v4H6L2.500 6.500 0 9zM24 0v9l-2.500-2.500L18 10h-4V6l3.500-3.500L15 0zM0 24v-9l2.500 2.500L6 14h4v4l-3.500 3.500L9 24zM24 24h-9l2.500-2.500L14 18v-4h4l3.500 3.500L24 15z" /></svg>
          </div>
          <h1><span class="t big" use:fit={52}>BIG</span><span class="t" use:fit={225}>大数据第二阶段</span><span class="t big" use:fit={237}>-FLUME-DAY01</span></h1>
          <div class="setbox">
            <svg width="30" height="30" viewBox="-15 -15 30 30" fill="none" stroke="#a8a8a8"><circle r="10" stroke-width="2.400" />{#each [0, 45, 90, 135] as a}<path d="M0-14.500v4M0 14.500v-4" stroke-width="4.600" transform="rotate({a})" />{/each}</svg>
            <span>设置</span>
          </div>
        </section>
        <aside class="sidetab">
          <svg width="34" height="28" viewBox="0 0 34 28" stroke="#9a9a9a" stroke-width="3.400" stroke-linecap="round"><path d="M2 3h.1M2 14h.1M2 25h.1" /><path d="M10 3h22M10 14h22M10 25h22" stroke-width="3" /></svg>
          <span>章节</span>
        </aside>
        <aside class="panel">
          <h2>章节</h2>
          <div class="chapter"><span>上午视频</span><svg width="23" height="23" viewBox="0 0 23 23"><circle cx="11.500" cy="11.500" r="11.400" fill="#0abf1c" /><path d="M5.500 12l4 4 8-8" fill="none" stroke="#fff" stroke-width="2.400" /></svg></div>
          <div class="chapter here"><span>下午视频</span></div>
        </aside>
      </div>
    </div>
    <div class="scroll">
      <svg width="10" height="6" viewBox="0 0 10 6"><path d="M0 6l5-5.500L10 6z" fill="#4f4f4f" /></svg>
      <i></i>
      <svg width="10" height="6" viewBox="0 0 10 6"><path d="M0 0h10L5 5.500z" fill="#4f4f4f" /></svg>
    </div>
  </main>

  <footer class="taskbar">
    <span class="start">{@render winlogo()}</span>
    {#each tasks as task}
      <div class="task {task.kind ?? ''}">
        <span class="ti">{@render icon(task.icon)}</span>
        <span class="t tl" use:fit={task.w}>{task.label}</span>
      </div>
    {/each}
    <div class="speed">
      <svg width="16" height="29" viewBox="0 0 16 29" stroke="#fff" stroke-width="1.800" fill="none"><path d="M5.500 13V2M1.500 6l4-4 4 4M5.500 16v11M1.500 23l4 4 4-4" /><path d="M14 4h.1M14 10h.1M14 19h.1M14 25h.1" stroke-width="2.500" stroke-linecap="square" /></svg>
      <div class="rates"><span class="t" use:fit={64}>145 kB/s</span><span class="t" use:fit={72}>1104 kB/s</span></div>
    </div>
    <div class="tray">
      <span class="du">du</span>
      <span class="q">{@render icon('qmark')}</span>
      <span class="ime">{@render icon('imebar')}</span>
      <span class="tri">{@render icon('uptri')}</span>
      <span class="pan"><svg width="16" height="14" viewBox="0 0 16 14" fill="none" stroke-width="2"><circle cx="4" cy="9.500" r="3" stroke="#2a9cf0" /><circle cx="12" cy="9.500" r="3" stroke="#2a9cf0" /><circle cx="8" cy="4" r="3" stroke="#e53d4f" /></svg></span>
      <svg class="spk" width="17" height="20" viewBox="0 0 17 20"><path d="M1 6h2.500L9 1v18l-5.500-5H1z" fill="#fff" stroke="#5a6b7c" stroke-width=".8" /><path d="M13 6q3 4 0 8" stroke="#fff" stroke-width="1.300" fill="none" /></svg>
      <span class="clock"><span class="t" use:fit={40}>23:16</span></span>
      <span class="desk"></span>
    </div>
  </footer>
</div>

<style>
  :global(body) { margin: 0; background: #000; }
  :global(*) { box-sizing: border-box; }
  .screen {
    width: 1920px; height: 1080px; overflow: hidden; display: flex; flex-direction: column;
    font-family: 'Open Sans', 'Noto Sans CJK SC', sans-serif; font-size: 15px; color: #333;
  }
  svg { display: block; flex: none; }
  .t { display: inline-block; white-space: pre; flex: none; }
  .latin { font-size: 16px; line-height: 20px; }
  .ln { fill: none; stroke: #5f6368; stroke-width: 1.9; }
  .ln.dim { stroke: #b9bbbe; }
  .fade { overflow: hidden; mask-image: linear-gradient(90deg, #000 calc(100% - 32px), transparent); }

  /* tab strip */
  .strip {
    flex: none; height: 42px; display: flex; padding-left: 10px;
    background:
      linear-gradient(90deg, #b9d8f2 0, #b9d8f200 22px),
      linear-gradient(90deg, transparent 1205px, #5c92c5 1212px, #76a9da 1250px, transparent 1290px, transparent 1370px, #6396c9 1400px, #6da0d3 1490px, transparent 1530px, transparent 1590px, #6699cb99 1620px, transparent 1780px) 0 0 / 100% 26px no-repeat,
      linear-gradient(#77a9db 0, #77a9db 24px, #9ccaf5 32px, #a0cef8 42px);
  }
  .tab {
    flex: none; width: 299px; height: 42px; display: flex; align-items: center; padding-left: 18px; padding-bottom: 1px;
    border-radius: 11px 11px 0 0; background: linear-gradient(100deg, #cfdae6, #c3d1e0 60%, #cdd9e6); color: #5f6a76; position: relative;
  }
  .tab.active { background: #fff; color: #333; width: 300px; }
  .tab:nth-child(3) { border-bottom-left-radius: 11px; border-right: 1px solid #8796a6; padding-left: 13px; }
  .tab:nth-child(4) { padding-left: 13px; width: 298px; }
  .tabicon { width: 27px; flex: none; }
  .tab:nth-child(n + 3) .tabicon { width: 31px; }
  .tablabel { width: 202px; flex: none; white-space: nowrap; }
  .tab:nth-child(n + 3) .tablabel { width: 218px; }
  .sound { margin: 0 0 0 -1px; }
  .close { margin-left: auto; margin-right: 14px; }
  .tab.active .close { margin-right: 15px; }
  .newtab { width: 34px; height: 34px; margin: 4px 0 0 10px; border-radius: 50%; background: #c5d3e1; display: grid; place-items: center; }
  .winctl { margin-left: auto; margin-right: 3px; width: 128px; height: 24px; display: flex; border: 1.5px solid #45566c; border-top: 0; border-radius: 0 0 6px 6px; overflow: hidden; box-shadow: 0 0 1px 1px #d6e7f7; }
  .winctl span { display: grid; place-items: center; background: linear-gradient(#b7cde3, #9fbcd8 45%, #5f8bb5 50%, #8db3d6); border-right: 1px solid #45566c; }
  .wmin { width: 34px; padding-top: 8px; }
  .wmax { width: 33px; padding-bottom: 2px; }
  .winctl .wx { flex: 1; border: 0; padding-bottom: 2px; background: linear-gradient(#dca092, #cf6a55 45%, #b5301b 50%, #d96a4c); }

  /* address row */
  .toolbar { flex: none; height: 46px; background: #fff; display: flex; align-items: center; padding-left: 8px; }
  .nb { width: 39.9px; display: grid; place-items: center; flex: none; }
  .omni { width: 1464px; height: 35px; border-radius: 18px; background: #f0f1f3; margin-left: 8px; display: flex; align-items: center; padding: 0 14px; font-size: 18px; flex: none; }
  .omni .t { margin-top: -2px; }
  .unsafe { margin-left: 11px; color: #5f6368; font-size: 17.500px; }
  .bar { width: 1.5px; height: 20px; background: #8b8e92; margin: 0 11px 0 8px; }
  .host { color: #222; }
  .path { color: #7d8084; }
  .fav { margin-left: auto; }
  .ext { position: relative; height: 27px; flex: none; }
  .ext b { position: absolute; right: 0; bottom: 1px; height: 15px; line-height: 15px; border-radius: 2px; background: #5c5e61; color: #fff; font-size: 13px; text-align: center; font-weight: 600; }
  .red { width: 28px; margin-left: 20px; margin-top: 7px; }
  .red i { display: block; width: 20px; height: 20px; border-radius: 2px; background: radial-gradient(circle, #fff 1.300px, transparent 1.900px) 2px 8px / 5px 5px repeat-x, #d72b2b; }
  .red b { width: 15px; }
  .ub { width: 28px; margin-left: 8px; margin-top: 7px; }
  .ub svg { margin-left: 5px; }
  .ub b { width: 28px; }
  .vbar { width: 1px; height: 20px; background: #c6c8ca; margin-left: 15px; }
  .chev { width: 25px; margin-left: 21px; margin-top: 7px; padding-top: 3px; }
  .chev b { width: 15px; background: #4285f4; }
  .kebab { margin-left: 26px; }

  /* bookmarks */
  .marks { flex: none; height: 39px; background: #fff; border-bottom: 1px solid #b3b6b9; padding: 0 0 5px 19px; display: flex; align-items: center; color: #333; }
  .mark { display: flex; align-items: center; flex: none; white-space: nowrap; }
  .mark .t { margin-top: -1px; }
  .mi { flex: none; }
  .glyph { display: grid; place-items: center; width: 20px; height: 20px; border-radius: 3px; color: #fff; font-size: 14px; font-weight: 700; line-height: 1; overflow: hidden; }
  .zhi { background: #d8342f; border-radius: 50%; }
  .yi { background: #2286f5; }
  .tao { background: #f0562a; border-radius: 5px; }
  .you { background: #f2a12e; border-radius: 0; }

  /* page */
  .page { flex: none; height: 919px; display: flex; background: #000; }
  .content { width: 1899px; flex: none; display: flex; flex-direction: column; overflow: hidden; }
  .bluebar { height: 11px; flex: none; background: #1c8abf; overflow: hidden; display: flex; }
  .avatar { width: 40px; height: 40px; border-radius: 50%; background: #e4e9f2; margin: -36px 0 0 1749px; }
  .columns { display: flex; flex: 1; min-height: 0; }
  .left { width: 1468px; flex: none; position: relative; padding-left: 22px; }

  /* recorded desktop */
  .video { width: 1027px; height: 769px; margin-left: 205px; display: flex; flex-direction: column; position: relative; background: #f6edf7; font-size: 12.500px; color: #222; }
  .etitle { flex: none; height: 22px; display: flex; align-items: center; background: linear-gradient(#8fa9d2, #abc1e3); padding-left: 3px; border-top: 1px solid #6f7b90; font-size: 13px; }
  .epath { margin-top: -3px; }
  .eicon { width: 23px; margin-top: -2px; }
  .ectl { margin-left: auto; display: flex; gap: 3px; margin: -2px 3px 0 auto; }
  .ectl span { width: 30px; height: 17px; border: 1px solid #62789a; border-radius: 2px; display: grid; place-items: center; background: linear-gradient(#cbdaf0, #93add4); }
  .ectl .ex { background: linear-gradient(#e0a092, #c8462c 50%, #d5593f); border-color: #7d2a20; }
  .emenu { flex: none; height: 24px; display: flex; align-items: center; padding-left: 8px; padding-bottom: 2px; border-bottom: 1px solid #a39ea6; }
  .emenu > span { flex: none; }
  .share { position: absolute; left: 283px; top: 0; width: 461px; height: 32px; background: #f0efff; border: 1px solid #7d95bb; border-top: 0; display: flex; align-items: center; padding-left: 6px; }
  .ball { width: 12px; height: 12px; border-radius: 50%; background: radial-gradient(circle at 40% 30%, #c8f5b5, #2ea01f 75%); }
  .sl { color: #1f7a2c; margin-left: 4px; margin-right: 210px; }
  .sbtn { width: 63px; height: 22px; border: 1px solid #e0e0ee; background: #fbfaff; margin-right: 5px; display: grid; place-items: center; font-size: 12px; flex: none; white-space: nowrap; }
  .etools { flex: none; height: 26px; display: flex; align-items: center; border-bottom: 1px solid #aaa5ad; }
  .tool { flex: none; display: grid; place-items: center; }
  .tsep { width: 1px; height: 17px; background: #a9a4ac; }
  .toggle { width: 40px; height: 20px; display: flex; align-items: center; border: 1px solid #77727c; border-radius: 3px; background: linear-gradient(90deg, transparent 22px, #77727c 22px, #77727c 23px, transparent 23px), #d8d2dc; }
  .edit { flex: 1; display: flex; position: relative; background: #fff; min-height: 0; padding-top: 1px; }
  .gutter { width: 84px; flex: none; background: #f0e7fe; display: flex; flex-direction: column; font: 25px/37.100px 'Liberation Mono', monospace; color: #aba6b8; text-align: right; padding-right: 19px; padding-top: 4px; }
  .lines { flex: none; width: 873px; height: 298px; border-left: 2px solid #1f7f2a; padding-left: 2px; font: 26.100px/37.100px 'Liberation Mono', 'Noto Sans CJK SC', monospace; color: #111; }
  .line { height: 37.1px; white-space: pre; display: flex; align-items: center; }
  .line span { margin-top: 8px; }
  .current { background: #e9fbff; }
  .l { color: #4d4d4d; letter-spacing: .22px; }
  .o { color: #1414e6; font-weight: 700; letter-spacing: .22px; }
  .n { color: #d93a3a; letter-spacing: .22px; }
  .caret { width: 1px; height: 37px; background: #111; }
  .mini { margin-left: 4px; }
  .escroll { width: 18px; margin-left: auto; padding-right: 2px; background: #f5eef8; display: flex; flex-direction: column; align-items: center; }
  .split { width: 16px; height: 7px; border: 1px solid #8e8993; border-top: 0; border-left: 0; background: #efe8f2; }
  .up { margin: 8px 0 7px; }
  .ethumb { width: 15px; height: 370px; border: 1px solid #a19ca8; border-radius: 2px; background: linear-gradient(90deg, #eee9f1, #d9d4dd 45%, #b8b2be); display: grid; place-items: center; }
  .enav { margin-top: 160px; display: flex; flex-direction: column; align-items: center; gap: 13px; }
  .ibeam { position: absolute; left: 441px; top: 286px; }
  .status { flex: none; height: 22px; display: flex; align-items: center; border-top: 1px solid #aaa5ad; white-space: nowrap; }
  .ready { width: 433px; padding-left: 2px; flex: none; }
  .cell { height: 20px; display: flex; align-items: center; border-left: 1px solid #ddd2de; padding-left: 4px; flex: none; }
  .si { width: 20px; }
  .si.c { padding-left: 4px; }
  .itask { flex: none; height: 29px; display: flex; background: linear-gradient(90deg, #8193b3 58px, #a9bce3 62px, #a9bce3 805px, #8193b3 825px); border-top: 1px solid #5d6c8a; overflow: hidden; }
  .iorb { width: 60px; padding: 0 0 0 10px; margin-top: -2px; flex: none; }
  .iorb :global(svg) { width: 34px; height: 34px; }
  .ib { flex: none; height: 29px; display: grid; place-items: center; border: 1px solid #7083a8; border-radius: 3px; background: linear-gradient(135deg, #d7dff3, #b3c2e6 60%, #c2d0f0); box-shadow: inset 0 0 0 1px #dfe6f6; }
  .ib.on { background: #e8edfb; }
  .ib.stack { box-shadow: inset 0 0 0 1px #dfe6f6, 3px 0 0 #c9d5ef, 4px 0 0 #7083a8, 7px 0 0 #c9d5ef, 8px 0 0 #7083a8; }
  .itray { margin-left: auto; display: flex; align-items: center; color: #e9eef7; }
  .itray > svg:first-child { margin: -4px 0 0 -3px; }
  .itray .q { margin-left: 6px; margin-top: -5px; zoom: .85; }
  .itray .ime { margin-left: 8px; }
  .itray .tri { margin: 2px 0 0 10px; }
  .itray .net { margin-left: 11px; margin-top: 3px; }
  .iclock { margin-left: 19px; margin-top: 1px; margin-right: 12px; }
  .idesk { width: 14px; height: 29px; border: 1px solid #8c9bb5; background: linear-gradient(120deg, #8e9cb5, #4f5f7b 50%, #7989a5); }

  /* player */
  .progress { width: 1438px; height: 3px; background: #999; }
  .progress i { display: block; width: 1434px; height: 3px; background: #f07000; }
  .controls { width: 1438px; height: 53px; background: #242424; display: flex; align-items: center; padding: 2px 0 0 30px; }
  .cdiv { width: 1px; height: 26px; background: #444; margin: 0 25px 0 30px; }
  .now, .total, .slash { font: bold 16px 'Liberation Sans', Arial, sans-serif; color: #e4e4e4; }
  .slash { color: #8a8a8a; font-weight: 400; width: 18px; text-align: center; flex: none; }
  .total { color: #8a8a8a; }
  .vol { margin-left: auto; }
  .slider { width: 107px; height: 6px; background: #414141; margin-left: 9px; position: relative; flex: none; }
  .slider i { display: block; width: 64px; height: 6px; background: #f07000; }
  .slider b { position: absolute; left: 57px; top: -3px; width: 13px; height: 13px; border-radius: 50%; background: #fff; }
  .pill { width: 49px; height: 35px; padding-top: 4px; border-radius: 4px; background: #404040; color: #9b9b9b; font-size: 19px; font-weight: 600; line-height: 26px; display: grid; place-items: center; margin: -8px 19px 0 0; flex: none; }
  .pill.first { margin: -8px 14px 0 17px; }
  .full { margin: 0 22px 0 17px; }
  h1 { margin: 0; padding: 32px 0 0 66px; font-weight: 400; font-size: 32px; line-height: 52px; color: #c0c0c0; display: flex; align-items: baseline; }
  .big { font-size: 34px; }
  .setbox { position: absolute; left: 1355px; top: 350px; width: 80px; height: 72px; background: #1d1d1d; border: 1px solid #262626; display: flex; flex-direction: column; align-items: center; color: #a8a8a8; font-size: 19.500px; font-weight: 700; line-height: 25px; padding: 9px 2px 0 0; }

  .sidetab { width: 67px; height: 87px; margin-top: 72px; background: #1c1c1c; border-radius: 3px; display: flex; flex-direction: column; align-items: center; color: #fff; font-size: 20px; line-height: 30px; font-weight: 700; padding-top: 16px; flex: none; }
  .sidetab svg { margin: 0 2px 6px 0; }
  .panel { width: 355px; margin-top: 7px; background: #141414; color: #fff; font-size: 20px; font-weight: 600; flex: none; }
  h2 { margin: 0 0 0 4px; height: 66px; line-height: 66px; font-size: 20px; font-weight: 700; border-bottom: 1px solid #555; }
  .chapter { height: 40px; margin-top: 8px; padding: 0 12px 0 14px; display: flex; align-items: center; justify-content: space-between; }
  .chapter span { margin-top: -2px; }
  .chapter.here { margin-top: 0; color: #02a0e6; }
  .scroll { width: 21px; background: #f0f0f0; display: flex; flex-direction: column; align-items: center; justify-content: space-between; padding: 9px 0; }
  .scroll i { width: 17px; height: 608px; background: #c1c1c1; margin-top: -173px; }

  /* taskbar */
  .taskbar { flex: none; height: 34px; display: flex; position: relative; border-top: 1px solid #93abc3; color: #fff; font-size: 16px; background: linear-gradient(90deg, #46688a, #4a6c8f 60px, #456688 1200px, #54759a 1240px, #456686 1300px, #52749a 1340px, #4f7092 1550px, #55769a 1750px, #486988); }
  .start { width: 72px; flex: none; display: grid; justify-content: center; }
  .start :global(svg) { width: 44px; height: 44px; margin: -9px 0 0 -6px; position: relative; }
  .task { flex: none; width: 158px; height: 33px; margin-right: 4px; display: flex; align-items: center; padding-left: 9px; border: 1px solid #2c435c; border-radius: 3px; background: linear-gradient(170deg, #93a9bd, #6f8ca8 45%, #557594 50%, #5e7e9d); box-shadow: inset 0 0 0 1px #a9bdcf; text-shadow: 0 0 3px #24384d; }
  .tl { margin-top: -2px; }
  .task.first { width: 159px; margin-right: 0; border-right: 0; border-radius: 3px 0 0 3px; box-shadow: inset 1px 1px 0 #a9bdcf, inset 0 -1px 0 #a9bdcf; }
  .task.joined { width: 159px; border-left: 0; border-radius: 0 3px 3px 0; }
  .task.lit { background: linear-gradient(170deg, #d4dde5, #a9bac9 45%, #93a8ba 50%, #b0c0cd); box-shadow: inset 0 0 0 1px #e3ebf2; }
  .ti { width: 24px; flex: none; }
  .speed { display: flex; margin-left: 301px; padding-top: 1px; font-size: 14px; font-weight: 600; }
  .rates { width: 92px; display: flex; flex-direction: column; align-items: flex-end; line-height: 15px; }
  .tray { display: flex; margin-left: 60px; flex: 1; }
  .du { width: 20px; height: 20px; background: #12a1f5; margin-top: 4px; font-weight: 700; font-style: italic; text-align: center; line-height: 20px; font-size: 14px; }
  .tray .q { margin: 4px 0 0 7px; }
  .tray .ime { margin: 3px 0 0 10px; }
  .tray .tri { margin: 14px 0 0 14px; }
  .pan { width: 20px; height: 20px; margin: 7px 0 0 17px; background: #fff; border-radius: 3px; display: grid; place-items: center; }
  .spk { margin: 7px 0 0 12px; }
  .clock { margin: 5px 15px 0 19px; }
  .desk { width: 14px; margin-left: auto; border: 1px solid #8fa5bb; background: linear-gradient(120deg, #7f97b0, #3d5875 60%, #5b7896); }
</style>
